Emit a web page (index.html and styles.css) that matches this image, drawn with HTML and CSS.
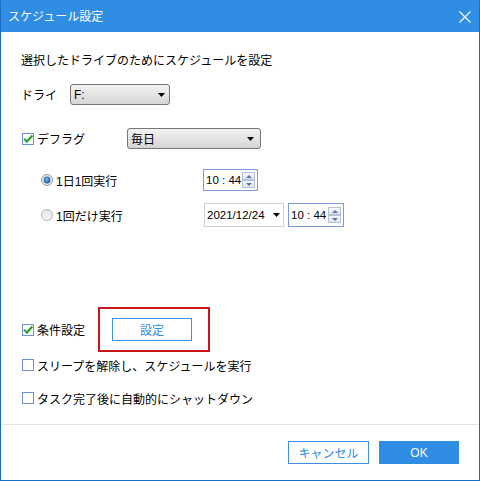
FILE: index.html
```html
<!DOCTYPE html>
<html lang="ja">
<head>
<meta charset="utf-8">
<title>スケジュール設定</title>
<link rel="stylesheet" href="styles.css">
</head>
<body>
<div class="window">
  <div class="titlebar">
    <span class="title">スケジュール設定</span>
    <svg class="close" width="12" height="12" viewBox="0 0 12 12"><path d="M0.5 0.5 L11.5 11.5 M11.5 0.5 L0.5 11.5" stroke="#fff" stroke-width="1.1" fill="none"/></svg>
  </div>
  <div class="content">
    <div class="row intro">選択したドライブのためにスケジュールを設定</div>

    <div class="row drive">
      <span class="label label-drive">ドライ</span>
      <div class="select select-drive">
        <span class="latin">F:</span>
        <svg class="arrow" width="7" height="4" viewBox="0 0 7 4"><path d="M0 0 H7 L3.5 4 Z" fill="#000"/></svg>
      </div>
    </div>

    <div class="row defrag">
      <span class="check-label col-defrag">
        <svg class="cb" width="12" height="12" viewBox="0 0 12 12"><rect x="0.5" y="0.5" width="11" height="11" fill="#fff" stroke="#6f8fd6"/><path d="M2.2 5.6 L4.8 8.6 L10.4 2.4" stroke="#2aa52a" stroke-width="2.2" fill="none"/></svg>
        デフラグ
      </span>
      <div class="select select-freq">
        <span>毎日</span>
        <svg class="arrow" width="7" height="4" viewBox="0 0 7 4"><path d="M0 0 H7 L3.5 4 Z" fill="#000"/></svg>
      </div>
    </div>

    <div class="row radio1">
      <span class="radio-label col-radio">
        <svg class="rb" width="12" height="12" viewBox="0 0 12 12">
          <defs><radialGradient id="dot" cx="0.45" cy="0.4" r="0.6"><stop offset="0" stop-color="#7fb8f0"/><stop offset="1" stop-color="#1a4f98"/></radialGradient></defs>
          <circle cx="6" cy="6" r="5.5" fill="#e9e9e9" stroke="#9c9c9c"/>
          <circle cx="6" cy="6" r="3.4" fill="url(#dot)"/>
        </svg>
        1日1回実行
      </span>
      <div class="spinbox spin1">
        <span class="time">10 : 44</span>
        <span class="spinner"><span class="sb up"><i></i></span><span class="sb down"><i></i></span></span>
      </div>
    </div>

    <div class="row radio2">
      <span class="radio-label col-radio2">
        <svg class="rb" width="12" height="12" viewBox="0 0 12 12">
          <defs><linearGradient id="off" x1="0" y1="0" x2="0" y2="1"><stop offset="0" stop-color="#e2e2e2"/><stop offset="1" stop-color="#f8f8f8"/></linearGradient></defs>
          <circle cx="6" cy="6" r="5.5" fill="url(#off)" stroke="#b4b4b4"/>
        </svg>
        1回だけ実行
      </span>
      <div class="datebox">
        <span class="time">2021/12/24</span>
        <svg class="arrow" width="7" height="4" viewBox="0 0 7 4"><path d="M0 0 H7 L3.5 4 Z" fill="#000"/></svg>
      </div>
      <div class="spinbox spin2">
        <span class="time">10 : 44</span>
        <span class="spinner"><span class="sb up"><i></i></span><span class="sb down"><i></i></span></span>
      </div>
    </div>

    <div class="row cond">
      <span class="check-label col-cond">
        <svg class="cb" width="12" height="12" viewBox="0 0 12 12"><rect x="0.5" y="0.5" width="11" height="11" fill="#fff" stroke="#6f8fd6"/><path d="M2.2 5.6 L4.8 8.6 L10.4 2.4" stroke="#2aa52a" stroke-width="2.2" fill="none"/></svg>
        条件設定
      </span>
      <div class="highlight">
        <button class="btn btn-outline btn-setting">設定</button>
      </div>
    </div>

    <div class="row sleep">
      <span class="check-label">
        <svg class="cb" width="12" height="12" viewBox="0 0 12 12"><rect x="0.5" y="0.5" width="11" height="11" fill="#fff" stroke="#6f8fd6"/></svg>
        スリープを解除し、スケジュールを実行
      </span>
    </div>

    <div class="row task">
      <span class="check-label">
        <svg class="cb" width="12" height="12" viewBox="0 0 12 12"><rect x="0.5" y="0.5" width="11" height="11" fill="#fff" stroke="#6f8fd6"/></svg>
        タスク完了後に自動的にシャットダウン
      </span>
    </div>
  </div>

  <div class="footer">
    <button class="btn btn-outline btn-cancel">キャンセル</button>
    <button class="btn btn-primary btn-ok">OK</button>
  </div>
</div>
</body>
</html>
```

FILE: styles.css
```css
html, body {
  margin: 0;
  padding: 0;
  background: #ffffff;
}

body {
  font-family: "Liberation Sans", "Noto Sans CJK JP", sans-serif;
  font-size: 12px;
  color: #000;
}

.window {
  width: 480px;
  height: 481px;
  box-sizing: border-box;
  border: 1px solid #1b6fc2;
  border-top-color: #2f8de4;
  display: flex;
  flex-direction: column;
  background: #fff;
}

.titlebar {
  height: 31px;
  flex: none;
  background: #2f8de4;
  display: flex;
  align-items: center;
  justify-content: space-between;
  padding: 0 8px 0 7px;
}

.title {
  color: #fff;
  font-size: 12px;
  line-height: 14px;
  margin-top: 1px;
}

.close {
  display: block;
  margin-top: 1px;
}

.content {
  display: flex;
  flex-direction: column;
  padding-left: 20px;
}

.row {
  display: flex;
  align-items: center;
}

.intro {
  margin-top: 15px;
  height: 24px;
}

.drive {
  margin-top: 13px;
  height: 21px;
}

.label-drive {
  width: 49px;
}

.select {
  box-sizing: border-box;
  height: 21px;
  border: 1px solid #767676;
  border-radius: 3px;
  background: linear-gradient(#f3f3f3, #e4e4e4 50%, #d5d5d5);
  display: flex;
  align-items: center;
  justify-content: space-between;
  padding: 0 4px 0 3px;
}

.select .arrow, .datebox .arrow {
  display: block;
}

.select-drive {
  width: 100px;
}

.defrag {
  margin-top: 23px;
  height: 21px;
}

.select-freq {
  width: 134px;
  padding-right: 6px;
}

.check-label, .radio-label {
  display: flex;
  align-items: center;
  white-space: nowrap;
}

.cb {
  display: block;
  margin-left: 1px;
  margin-right: 3px;
  flex: none;
}

.col-defrag {
  width: 106px;
}

.rb {
  display: block;
  margin-right: 3px;
  flex: none;
}

.radio1 {
  margin-top: 20px;
  height: 22px;
}

.col-radio {
  margin-left: 20px;
  width: 162px;
}

.col-radio2 {
  margin-left: 20px;
  width: 163px;
}

.spinbox {
  box-sizing: border-box;
  border: 1px solid #7a9ad8;
  background: #fff;
  display: flex;
  align-items: center;
  justify-content: space-between;
  padding: 0 2px 0 2px;
}

.spin1 {
  width: 55px;
  height: 22px;
}

.spin2 {
  width: 56px;
  height: 24px;
  margin-left: 4px;
}

.time {
  font-family: "Liberation Sans", sans-serif;
  font-size: 11.5px;
}

.spinner {
  display: flex;
  flex-direction: column;
  width: 13px;
}

.sb {
  box-sizing: border-box;
  height: 8px;
  border: 1px solid #b6c2da;
  background: linear-gradient(#f7f8fb, #dfe4ee);
  display: flex;
  align-items: center;
  justify-content: center;
}

.sb i {
  width: 0;
  height: 0;
  border-left: 3px solid transparent;
  border-right: 3px solid transparent;
}

.sb.up i {
  border-bottom: 3px solid #5a74a8;
}

.sb.down i {
  border-top: 3px solid #5a74a8;
}

.radio2 {
  margin-top: 12px;
  height: 24px;
}

.datebox {
  box-sizing: border-box;
  width: 80px;
  height: 24px;
  border: 1px solid #cfcfcf;
  background: #fff;
  display: flex;
  align-items: center;
  justify-content: space-between;
  padding: 0 3px 0 2px;
}

.cond {
  margin-top: 80px;
  height: 45px;
}

.col-cond {
  width: 77px;
}

.highlight {
  box-sizing: border-box;
  width: 112px;
  height: 45px;
  border: 2px solid #c8161d;
  padding: 9px 0 0 12px;
}

.btn {
  box-sizing: border-box;
  height: 23px;
  font-family: "Liberation Sans", "Noto Sans CJK JP", sans-serif;
  font-size: 12px;
  padding: 0;
  cursor: pointer;
  display: block;
}

.btn-outline {
  background: #fff;
  border: 1px solid #3a8ee4;
  color: #2f8de4;
}

.btn-primary {
  background: #2f8de4;
  border: 1px solid #2f8de4;
  color: #fff;
}

.btn-setting {
  width: 80px;
}

.sleep {
  margin-top: 3px;
  height: 20px;
}

.task {
  margin-top: 13px;
  height: 20px;
}

.footer {
  margin-top: auto;
  border-top: 1px solid #e2e2e2;
  padding: 16px 20px 16px 0;
  display: flex;
  justify-content: flex-end;
  gap: 10px;
}

.btn-cancel {
  width: 81px;
}

.btn-ok {
  width: 80px;
}
```
